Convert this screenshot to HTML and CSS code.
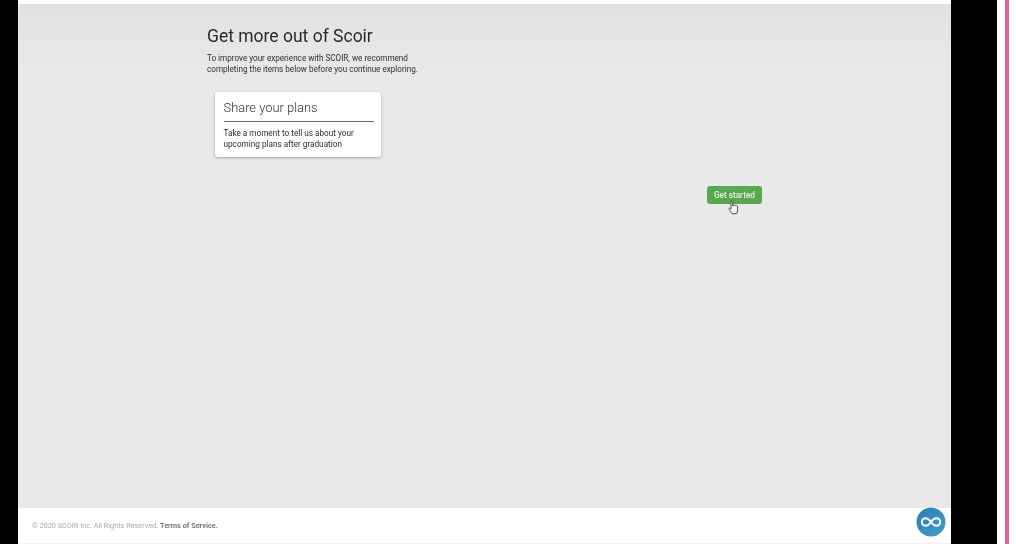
FILE: index.html
```html
<!DOCTYPE html>
<html lang="en">
<head>
<meta charset="utf-8">
<title>Get more out of Scoir</title>
<link rel="stylesheet" href="styles.css">
</head>
<body>
<div class="screen">
  <div class="bar-left"></div>
  <div class="app">
    <div class="top-strip"></div>
    <main class="main">
      <h1 class="title">Get more out of Scoir</h1>
      <p class="intro">To improve your experience with SCOIR, we recommend<br>completing the items below before you continue exploring.</p>
      <section class="card">
        <h2 class="card-title">Share your plans</h2>
        <p class="card-text">Take a moment to tell us about your<br>upcoming plans after graduation</p>
      </section>
      <div class="action">
        <button class="start">Get started</button>
        <svg class="pointer" width="14" height="16" viewBox="0 0 12 14" aria-hidden="true">
          <path d="M3.400 1.400c0-.9 1.500-.9 1.500 0v3.800l.2-.5c.4-.6 1.300-.3 1.300.3.300-.6 1.300-.4 1.400.3.400-.5 1.300-.2 1.300.5v3c0 1.500-.6 2.400-1 3.200H4.400L1.800 8.300c-.6-.8.300-1.600 1-1l.6.600z" fill="#f4f4f4" stroke="#444" stroke-width=".8" stroke-linejoin="round"/>
        </svg>
      </div>
    </main>
    <footer class="footer">
      <span class="legal">© 2020 SCOIR Inc. All Rights Reserved. <b class="terms">Terms of Service.</b></span>
    </footer>
    <svg class="logo" width="30" height="30" viewBox="0 0 30 30" aria-hidden="true">
      <defs>
        <linearGradient id="logoFill" x1="0" y1="0" x2="1" y2="1">
          <stop offset="0" stop-color="#2c7db8"/>
          <stop offset="1" stop-color="#439ec4"/>
        </linearGradient>
      </defs>
      <circle cx="15" cy="15" r="14.500" fill="url(#logoFill)"/>
      <path d="M15 15c-1.600 2.400-3.200 3.800-5.400 3.800a3.800 3.800 0 0 1 0-7.600c2.200 0 3.800 1.700 5.400 3.800s3.200 3.800 5.400 3.800a3.800 3.800 0 0 0 0-7.600c-2.200 0-3.800 1.400-5.400 3.800z" fill="none" stroke="#f4f8fb" stroke-width="2"/>
    </svg>
  </div>
  <div class="bar-right"></div>
  <div class="gap"></div>
  <div class="pink"></div>
</div>
</body>
</html>
```
FILE: styles.css
```css
* { box-sizing: border-box; }
html, body { margin: 0; height: 100%; background: #fff; overflow: hidden; }
body { font-family: Roboto, "Liberation Sans", sans-serif; color: #333; }
.screen { display: flex; width: 1016px; height: 544px; }
.bar-left { width: 18px; background: #000; }
.bar-right { width: 46px; background: #000; }
.gap { width: 8px; background: #fff; }
.pink { width: 4px; background: #e4619f; }
.app { position: relative; width: 933px; display: flex; flex-direction: column; background: #fff; }
.top-strip { height: 4px; background: #fdfdfd; }
.main {
  flex: 1;
  padding: 22px 0 0 189px;
  background: linear-gradient(#e1e1e1, #e9e9e9 70px);
  filter: blur(0.5px);
}
.title { margin: 0; font-size: 17.500px; line-height: 21px; font-weight: 400; color: #2b2b2b; }
.intro { margin: 6px 0 0; font-size: 8.150px; line-height: 11px; color: #2e2e2e; }
.card {
  width: 166px;
  height: 65px;
  margin: 17px 0 0 8px;
  padding: 7px 7px 0 8.500px;
  background: #fff;
  border-radius: 3px;
  box-shadow: 0 1px 3px rgba(0,0,0,.3);
}
.card-title {
  margin: 0;
  height: 23px;
  font-size: 12.900px;
  line-height: 17px;
  font-weight: 300;
  color: #333;
  border-bottom: 1px solid #6a6a6a;
}
.card-text { margin: 6px 0 0; font-size: 8.200px; line-height: 11px; color: #2e2e2e; }
.action { position: relative; width: 55px; margin: 29px 0 0 500px; }
.start {
  display: block;
  width: 55px;
  height: 18px;
  padding: 0;
  border: 0;
  border-radius: 3px;
  background: #59a84f;
  color: #e6f2e4;
  font-family: inherit;
  font-size: 8.200px;
  font-weight: 500;
}
.pointer { position: absolute; left: 20px; top: 14px; }
.footer {
  height: 36px;
  display: flex;
  align-items: center;
  padding: 0 0 0 14px;
  background: #fff;
  border-bottom: 1px solid #f1f1f1;
  filter: blur(0.5px);
}
.legal { font-size: 7.300px; color: #aaa; }
.terms { font-weight: 700; color: #777; }
.logo { position: absolute; left: 898px; top: 507px; }
```
